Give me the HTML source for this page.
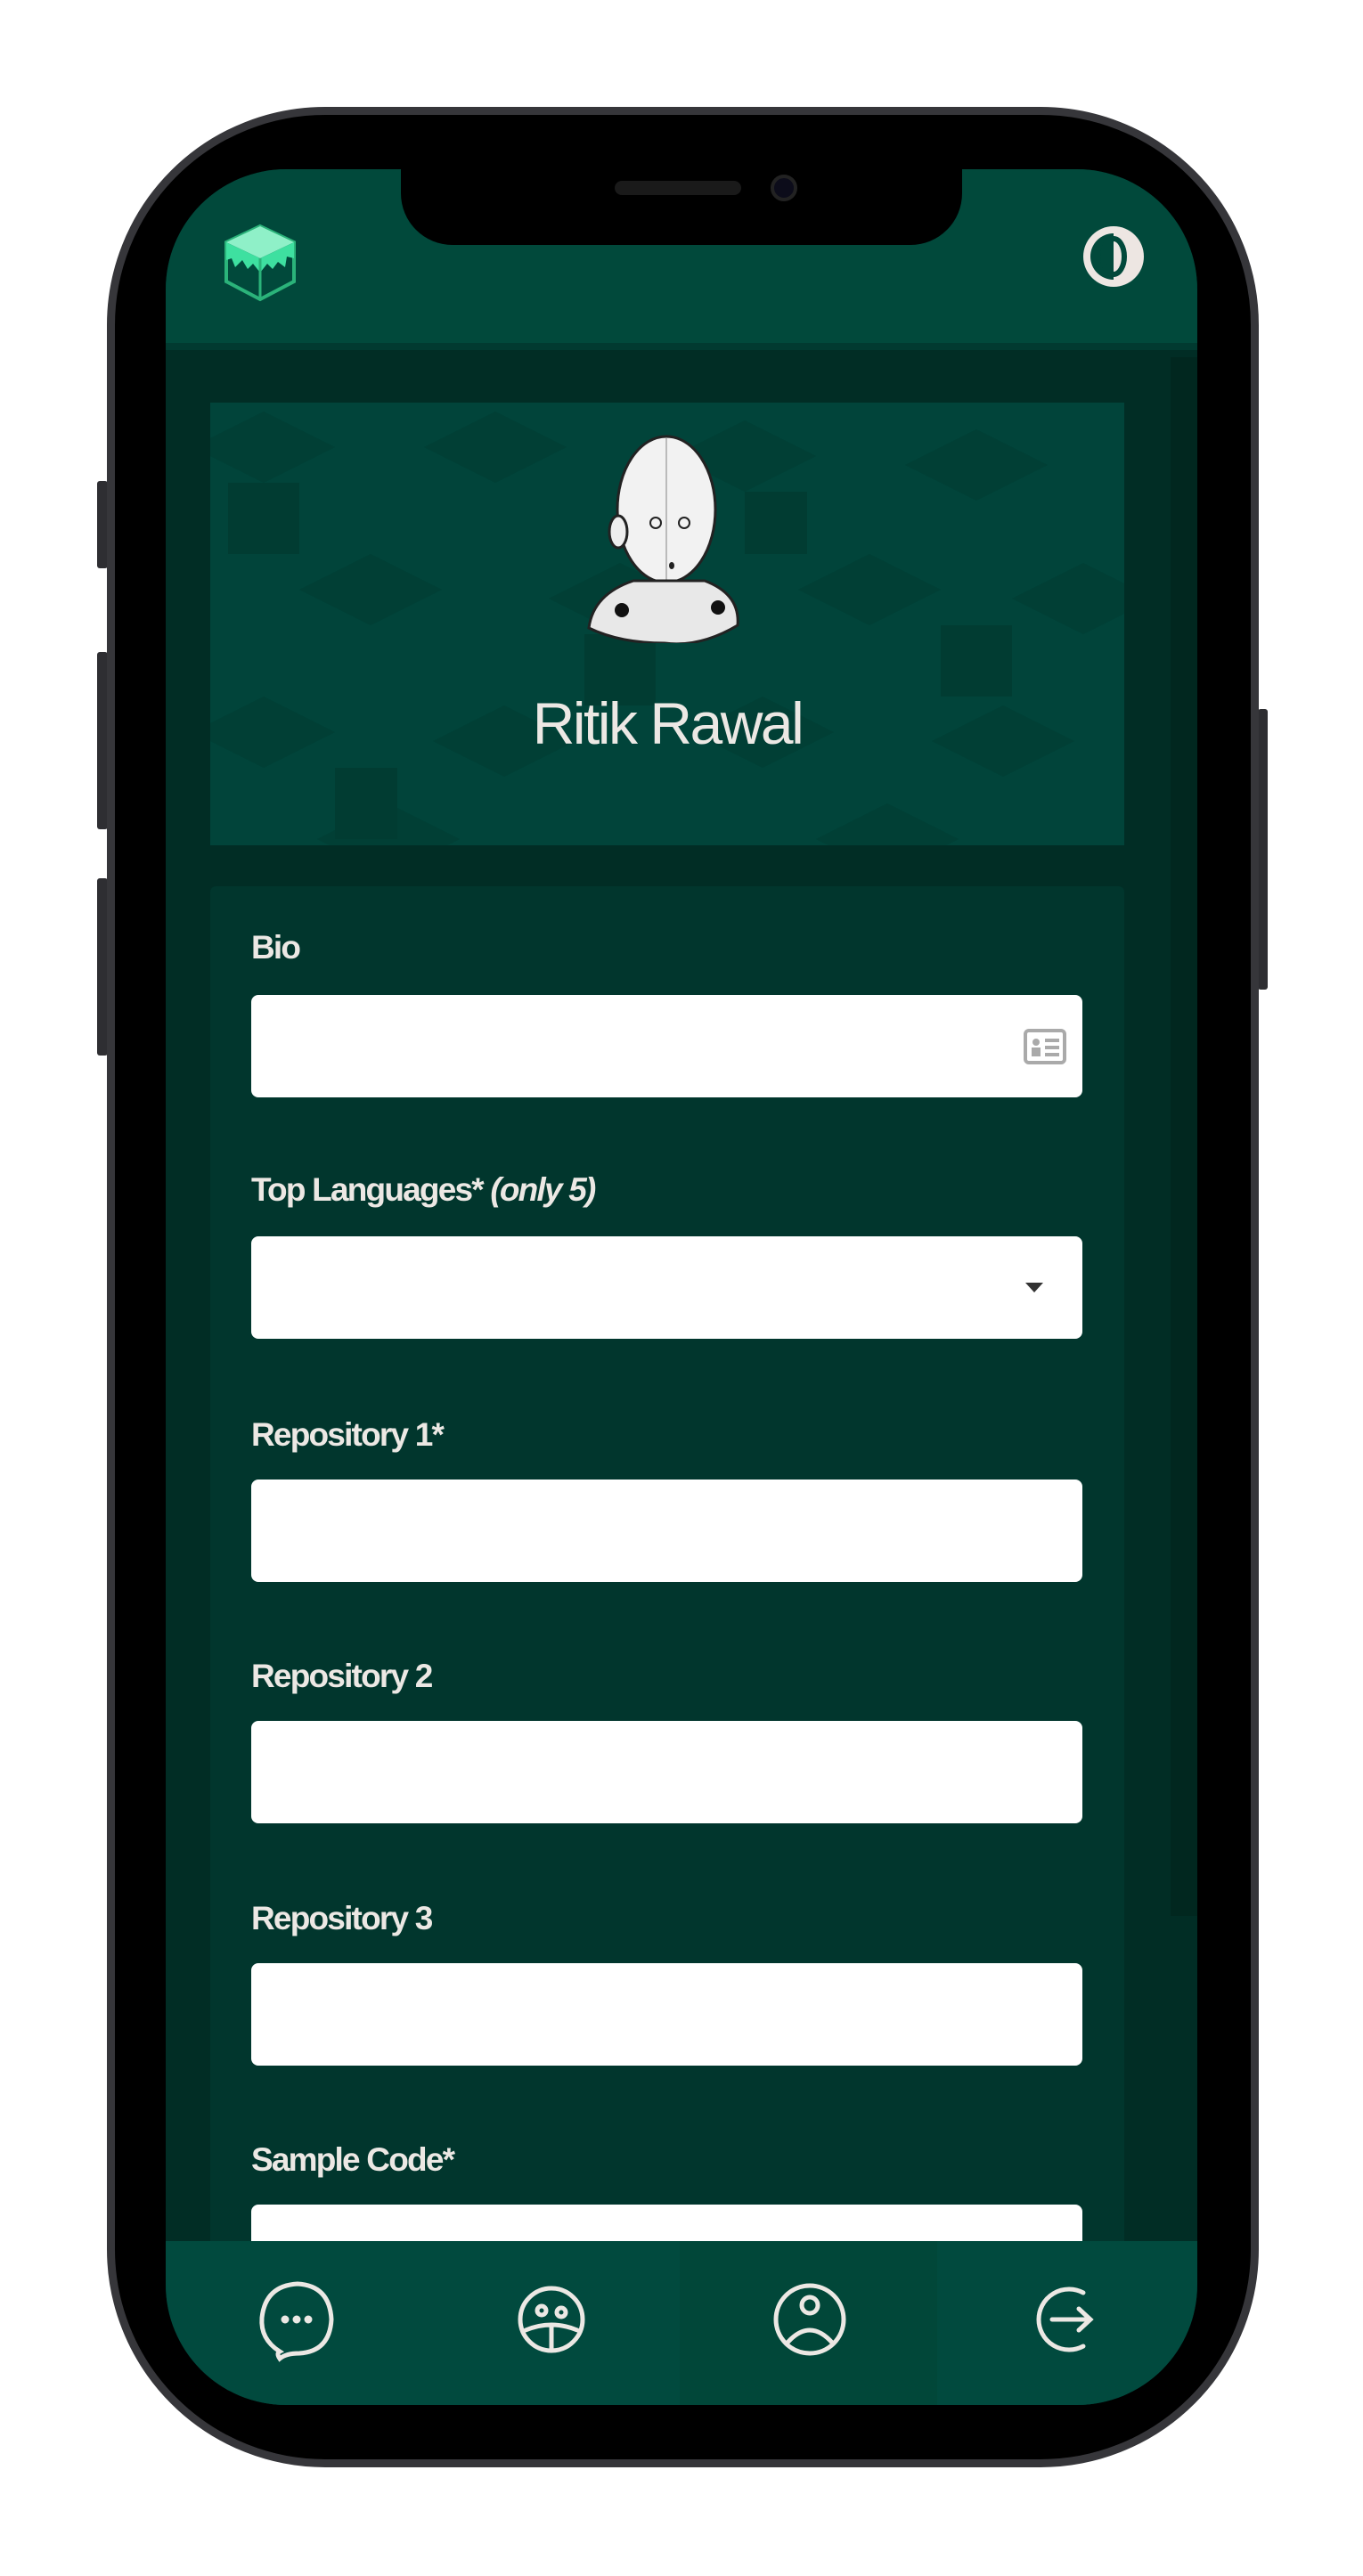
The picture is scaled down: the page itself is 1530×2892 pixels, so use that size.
<!DOCTYPE html>
<html><head><meta charset="utf-8"><style>
*{margin:0;padding:0;box-sizing:border-box}
body{width:1530px;height:2892px;background:#fff;position:relative;overflow:hidden;font-family:"Liberation Sans",sans-serif}
.abs{position:absolute}
.frame{left:120px;top:120px;width:1293px;height:2650px;border-radius:245px;background:#000;border:9px solid #36363a}
.btn{background:#2e2e32;border-radius:3px}
.screen{left:186px;top:190px;width:1158px;height:2510px;border-radius:135px;overflow:hidden;background:#012d25}
.header{left:0;top:0;width:1158px;height:203px;background:#01493b;border-bottom:8px solid #013a30}
.notch{left:264px;top:-10px;width:630px;height:95px;background:#000;border-radius:0 0 58px 58px}
.banner{left:50px;top:262px;width:1026px;height:497px;background:#01443a;overflow:hidden}
.card{left:50px;top:805px;width:1026px;height:1800px;background:#01362d;border-radius:6px}
.lab{position:absolute;left:46px;color:#ece8e4;font-weight:bold;font-size:37px;letter-spacing:-1.8px}
.inp{position:absolute;left:46px;width:933px;height:115px;background:#fff;border-radius:8px}
.nav{left:0;top:2326px;width:1158px;height:184px;background:#014a3e}
</style></head><body>
<div class="abs btn" style="left:109px;top:540px;width:12px;height:98px"></div>
<div class="abs btn" style="left:109px;top:732px;width:12px;height:199px"></div>
<div class="abs btn" style="left:109px;top:986px;width:12px;height:199px"></div>
<div class="abs btn" style="left:1412px;top:796px;width:11px;height:315px"></div>
<div class="abs frame"></div>
<div class="abs screen">
  <div class="abs header"></div>
  <div class="abs" style="right:0;top:211px;width:30px;height:1750px;background:#01271f"></div>
  <div class="abs banner">
    <svg width="1026" height="497" style="position:absolute;left:0;top:0">
      <g fill="#013f35">
        <polygon points="60,10 140,50 60,90 -20,50"/><polygon points="320,10 400,50 320,90 240,50"/><polygon points="600,20 680,60 600,100 520,60"/><polygon points="860,30 940,70 860,110 780,70"/>
        <polygon points="180,170 260,210 180,250 100,210"/><polygon points="460,180 540,220 460,260 380,220"/><polygon points="740,170 820,210 740,250 660,210"/><polygon points="980,180 1060,220 980,260 900,220"/>
        <polygon points="60,330 140,370 60,410 -20,370"/><polygon points="330,340 410,380 330,420 250,380"/><polygon points="620,330 700,370 620,410 540,370"/><polygon points="890,340 970,380 890,420 810,380"/>
        <polygon points="200,450 280,490 200,530 120,490"/><polygon points="760,450 840,490 760,530 680,490"/>
      </g>
      <g fill="#013c32">
        <rect x="20" y="90" width="80" height="80"/><rect x="420" y="260" width="80" height="80"/><rect x="820" y="250" width="80" height="80"/><rect x="600" y="100" width="70" height="70"/><rect x="140" y="410" width="70" height="80"/>
      </g>
    </svg>
    <svg class="abs" style="left:420px;top:25px" width="180" height="245" viewBox="0 0 180 245">
      <ellipse cx="92" cy="95" rx="55" ry="82" fill="#f2f2f2" stroke="#222" stroke-width="3"/>
      <path d="M92 15 L92 175" stroke="#bbb" stroke-width="2"/>
      <ellipse cx="38" cy="120" rx="10" ry="18" fill="#eee" stroke="#222" stroke-width="3"/>
      <circle cx="80" cy="110" r="6" fill="none" stroke="#222" stroke-width="2"/><circle cx="112" cy="110" r="6" fill="none" stroke="#222" stroke-width="2"/>
      <ellipse cx="98" cy="158" rx="3" ry="4" fill="#222"/>
      <path d="M5 228 Q10 190 55 175 L135 175 Q175 190 172 225 Q130 250 90 245 Q40 245 5 228Z" fill="#e8e8e8" stroke="#222" stroke-width="3"/>
      <circle cx="42" cy="208" r="8" fill="#111"/><circle cx="150" cy="205" r="8" fill="#111"/>
    </svg>
    <div class="abs" style="left:0;width:1026px;top:322px;text-align:center;color:#ece8e4;font-size:66px;letter-spacing:-2.5px">Ritik Rawal</div>
  </div>
  <div class="abs card">
    <div class="lab" style="top:48px">Bio</div>
    <div class="inp" style="top:122px"><svg class="abs" style="right:18px;top:38px" width="48" height="40" viewBox="0 0 48 40"><rect x="2" y="2" width="44" height="36" rx="4" fill="none" stroke="#aaa" stroke-width="4"/><circle cx="14" cy="15" r="4" fill="#aaa"/><rect x="9" y="21" width="10" height="10" fill="#aaa"/><rect x="24" y="11" width="16" height="4" fill="#aaa"/><rect x="24" y="19" width="16" height="4" fill="#aaa"/><rect x="24" y="27" width="16" height="4" fill="#aaa"/></svg></div>
    <div class="lab" style="top:320px">Top Languages* <i>(only 5)</i></div>
    <div class="inp" style="top:393px"><div class="abs" style="right:44px;top:52px;width:0;height:0;border-left:10px solid transparent;border-right:10px solid transparent;border-top:11px solid #333"></div></div>
    <div class="lab" style="top:595px">Repository 1*</div>
    <div class="inp" style="top:666px"></div>
    <div class="lab" style="top:866px">Repository 2</div>
    <div class="inp" style="top:937px"></div>
    <div class="lab" style="top:1138px">Repository 3</div>
    <div class="inp" style="top:1209px"></div>
    <div class="lab" style="top:1409px">Sample Code*</div>
    <div class="inp" style="top:1480px"></div>
  </div>
  <div class="abs nav">
    <div class="abs" style="left:577px;top:0;width:289px;height:184px;background:#014739"></div>
    <svg class="abs" style="left:0;top:0" width="1158" height="184" fill="none" stroke="#ece8e4" stroke-width="5" stroke-linecap="round">
      <path d="M128 124 Q106 110 108 86 Q112 50 148 48 Q184 50 186 88 Q184 124 150 126 Q135 126 128 132 Q124 126 128 124Z"/>
      <circle cx="134" cy="88" r="2" fill="#ece8e4"/><circle cx="147" cy="88" r="2" fill="#ece8e4"/><circle cx="160" cy="88" r="2" fill="#ece8e4"/>
      <circle cx="433" cy="88" r="35"/><circle cx="422" cy="78" r="5"/><circle cx="444" cy="80" r="5"/><path d="M404 100 Q433 88 462 100 M433 94 L433 122"/>
      <circle cx="723" cy="88" r="38"/><circle cx="723" cy="72" r="9"/><path d="M697 115 Q723 85 749 115"/>
      <path d="M1030 58 A34 34 0 1 0 1030 118 M995 88 L1038 88 M1025 76 L1038 88 L1025 100"/>
    </svg>
  </div>
  <div class="abs notch"><div class="abs" style="left:240px;top:23px;width:142px;height:16px;border-radius:8px;background:#1a1a1a"></div><div class="abs" style="left:415px;top:16px;width:30px;height:30px;border-radius:50%;background:#0c0c1a;border:4px solid #222"></div></div>
  <svg class="abs" style="left:64px;top:60px" width="84" height="90" viewBox="0 0 84 90">
    <polygon points="42,4 80,22 80,66 42,86 4,66 4,22" fill="none" stroke="#2bb37a" stroke-width="4"/>
    <polygon points="42,4 80,22 42,40 4,22" fill="#8ff0c8"/>
    <path d="M4 22 L42 40 L80 22 L80 40 L72 38 L70 50 L62 44 L56 52 L50 46 L42 56 L34 46 L28 52 L22 42 L14 50 L10 40 L4 42Z" fill="#3ee0a0"/>
    <path d="M42 40 L42 86" stroke="#2bb37a" stroke-width="3"/>
  </svg>
  <svg class="abs" style="left:1026px;top:60px" width="76" height="76" viewBox="0 0 76 76"><circle cx="38" cy="38" r="34" fill="#ede6e2"/><path d="M38 12 A26 26 0 0 0 38 64 Z" fill="#01493b"/><ellipse cx="38" cy="38" rx="12" ry="20" fill="none" stroke="#01493b" stroke-width="6"/></svg>
</div>
</body></html>
